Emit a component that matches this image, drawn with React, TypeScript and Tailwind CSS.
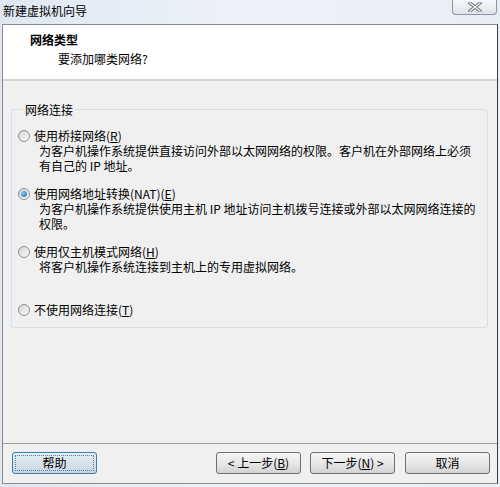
import React from "react";

const font = { fontFamily: '"Noto Sans CJK SC", "Noto Sans", sans-serif' };

function Radio({ checked }: { checked?: boolean }) {
  return (
    <span className="relative inline-flex w-[12px] h-[12px] shrink-0 rounded-full border border-[#8e8f8f] bg-gradient-to-br from-[#d4d4d4] to-[#fbfbfb] items-center justify-center">
      {checked && (
        <span className="w-[6px] h-[6px] rounded-full bg-[radial-gradient(circle_at_35%_35%,#8cc4f3,#1a64b4)]" />
      )}
    </span>
  );
}

function Option({
  checked,
  label,
  lines,
  last,
}: {
  checked?: boolean;
  label: React.ReactNode;
  lines?: string[];
  last?: boolean;
}) {
  return (
    <div className={last ? "" : "h-[58px]"}>
      <div className="flex items-center h-[14px] gap-[4px] leading-[14px]">
        <Radio checked={checked} />
        <span>{label}</span>
      </div>
      {lines && (
        <div className="ml-[21px] leading-[15px] whitespace-nowrap">
          {lines.map((l, i) => (
            <div key={i}>{l}</div>
          ))}
        </div>
      )}
    </div>
  );
}

function Btn({
  children,
  focused,
  className = "",
}: {
  children: React.ReactNode;
  focused?: boolean;
  className?: string;
}) {
  if (focused) {
    return (
      <div
        className={`w-[85px] h-[22px] rounded-[3px] border border-[#3c7fb1] bg-gradient-to-b from-[#e5eef5] to-[#c9d6e0] p-[2px] ${className}`}
      >
        <div className="w-full h-full border border-dotted border-[#5a7d99] flex items-center justify-center leading-none text-[12px]">
          {children}
        </div>
      </div>
    );
  }
  return (
    <div
      className={`w-[85px] h-[22px] rounded-[3px] border border-[#707070] bg-gradient-to-b from-[#f4f4f4] via-[#e8e8e8] to-[#d3d3d3] flex items-center justify-center leading-none text-[12px] ${className}`}
    >
      {children}
    </div>
  );
}

export default function App() {
  return (
    <div
      className="relative w-[500px] h-[487px] bg-gradient-to-r from-[#dfe8f2] via-[#eef2f7] to-[#e9eef4] text-black text-[12px] overflow-hidden"
      style={font}
    >
      {/* title bar */}
      <div className="h-[24px] pl-[3px] pt-[3px] leading-[16px] text-[12px] text-black">
        新建虚拟机向导
      </div>
      {/* close button */}
      <div className="absolute top-0 left-[452px] w-[45px] h-[15px] rounded-b-[4px] border border-t-0 border-[#8b95a3] bg-gradient-to-b from-[#f7f8fa] to-[#dfe3e9] flex items-center justify-center">
        <svg width="14" height="10" viewBox="0 0 14 10">
          <path d="M2 1 L12 9 M12 1 L2 9" stroke="#6b6f76" strokeWidth="3.2" strokeLinecap="square" />
          <path d="M2 1 L12 9 M12 1 L2 9" stroke="#f4f5f7" strokeWidth="1.4" strokeLinecap="square" />
        </svg>
      </div>

      {/* client */}
      <div className="ml-[2px] w-[496px] h-[460px] border border-[#8a8a8a] border-r-[#3c3c3c] flex flex-col bg-[#f0f0f0]">
        {/* header */}
        <div className="h-[56px] bg-white border-b-2 border-[#d4d4d4] pl-[27px] pt-[7px]">
          <div className="font-bold leading-[16px] text-[12px]">网络类型</div>
          <div className="pl-[28px] mt-[3px] leading-[16px]">要添加哪类网络?</div>
        </div>
        {/* body */}
        <div className="flex-1 pl-[8px] pr-[9px] pt-[21px]">
          <fieldset className="border border-[#d5dfe5] rounded-[3px] pl-[6px] pr-[4px] pb-[10px] pt-[12px] m-0 min-w-0">
            <legend className="ml-[5px] px-[2px] leading-[15px]">网络连接</legend>
            <Option
              label={
                <>
                  使用桥接网络(<u>R</u>)
                </>
              }
              lines={[
                "为客户机操作系统提供直接访问外部以太网网络的权限。客户机在外部网络上必须",
                "有自己的 IP 地址。",
              ]}
            />
            <Option
              checked
              label={
                <>
                  使用网络地址转换(NAT)(<u>E</u>)
                </>
              }
              lines={[
                "为客户机操作系统提供使用主机 IP 地址访问主机拨号连接或外部以太网网络连接的",
                "权限。",
              ]}
            />
            <Option
              label={
                <>
                  使用仅主机模式网络(<u>H</u>)
                </>
              }
              lines={["将客户机操作系统连接到主机上的专用虚拟网络。"]}
            />
            <Option
              last
              label={
                <>
                  不使用网络连接(<u>T</u>)
                </>
              }
            />
          </fieldset>
        </div>
        {/* footer */}
        <div className="h-[40px] border-t border-[#a0a0a0] pt-[8px] flex items-start pl-[9px]">
          <Btn focused>帮助</Btn>
          <div className="flex-1" />
          <Btn>
            &lt; 上一步(<u>B</u>)
          </Btn>
          <Btn className="ml-[9px]">
            下一步(<u>N</u>) &gt;
          </Btn>
          <Btn className="ml-[10px] mr-[7px]">取消</Btn>
        </div>
      </div>
    </div>
  );
}
